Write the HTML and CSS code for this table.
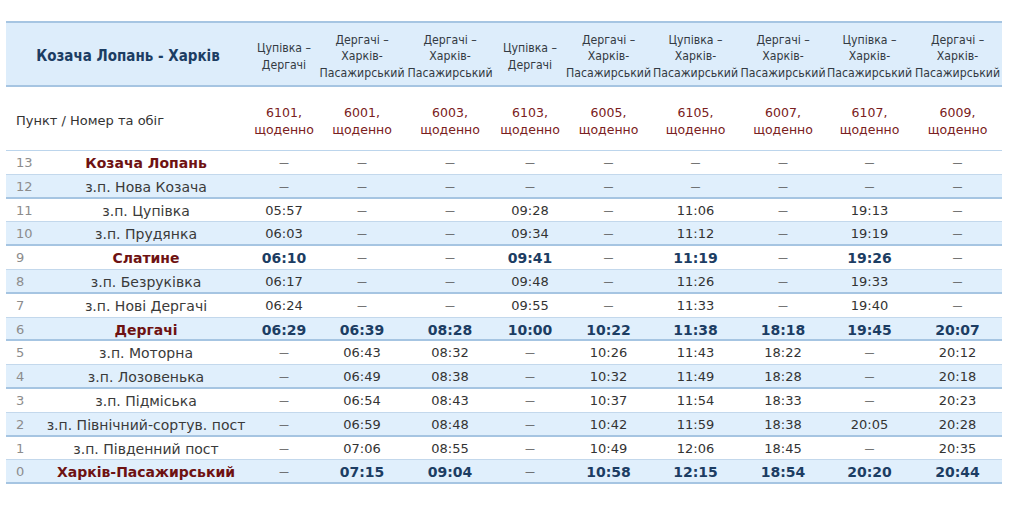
FILE: index.html
```html
<!DOCTYPE html>
<html lang="uk">
<head>
<meta charset="utf-8">
<title>Козача Лопань - Харків</title>
<link rel="stylesheet" href="styles.css">
</head>
<body>
<table class="schedule">
  <colgroup>
    <col class="w-num"><col class="w-st">
    <col class="w-68"><col class="w-88"><col class="w-88"><col class="w-72"><col class="w-85"><col class="w-89"><col class="w-86"><col class="w-87"><col class="w-89">
  </colgroup>
  <thead>
    <tr class="h-route">
      <th colspan="2" class="title">Козача Лопань - Харків</th>
      <th>Цупівка –<br>Дергачі</th>
      <th>Дергачі –<br>Харків-<br>Пасажирський</th>
      <th>Дергачі –<br>Харків-<br>Пасажирський</th>
      <th>Цупівка –<br>Дергачі</th>
      <th>Дергачі –<br>Харків-<br>Пасажирський</th>
      <th>Цупівка –<br>Харків-<br>Пасажирський</th>
      <th>Дергачі –<br>Харків-<br>Пасажирський</th>
      <th>Цупівка –<br>Харків-<br>Пасажирський</th>
      <th>Дергачі –<br>Харків-<br>Пасажирський</th>
    </tr>
    <tr class="h-train">
      <td colspan="2" class="label">Пункт / Номер та обіг</td>
      <td>6101,<br>щоденно</td>
      <td>6001,<br>щоденно</td>
      <td>6003,<br>щоденно</td>
      <td>6103,<br>щоденно</td>
      <td>6005,<br>щоденно</td>
      <td>6105,<br>щоденно</td>
      <td>6007,<br>щоденно</td>
      <td>6107,<br>щоденно</td>
      <td>6009,<br>щоденно</td>
    </tr>
  </thead>
  <tbody>
    <tr class="odd main"><td class="num">13</td><td class="st">Козача Лопань</td><td class="no">—</td><td class="no">—</td><td class="no">—</td><td class="no">—</td><td class="no">—</td><td class="no">—</td><td class="no">—</td><td class="no">—</td><td class="no">—</td></tr>
    <tr class="even"><td class="num">12</td><td class="st">з.п. Нова Козача</td><td class="no">—</td><td class="no">—</td><td class="no">—</td><td class="no">—</td><td class="no">—</td><td class="no">—</td><td class="no">—</td><td class="no">—</td><td class="no">—</td></tr>
    <tr class="odd"><td class="num">11</td><td class="st">з.п. Цупівка</td><td>05:57</td><td class="no">—</td><td class="no">—</td><td>09:28</td><td class="no">—</td><td>11:06</td><td class="no">—</td><td>19:13</td><td class="no">—</td></tr>
    <tr class="even"><td class="num">10</td><td class="st">з.п. Прудянка</td><td>06:03</td><td class="no">—</td><td class="no">—</td><td>09:34</td><td class="no">—</td><td>11:12</td><td class="no">—</td><td>19:19</td><td class="no">—</td></tr>
    <tr class="odd main"><td class="num">9</td><td class="st">Слатине</td><td>06:10</td><td class="no">—</td><td class="no">—</td><td>09:41</td><td class="no">—</td><td>11:19</td><td class="no">—</td><td>19:26</td><td class="no">—</td></tr>
    <tr class="even"><td class="num">8</td><td class="st">з.п. Безруківка</td><td>06:17</td><td class="no">—</td><td class="no">—</td><td>09:48</td><td class="no">—</td><td>11:26</td><td class="no">—</td><td>19:33</td><td class="no">—</td></tr>
    <tr class="odd"><td class="num">7</td><td class="st">з.п. Нові Дергачі</td><td>06:24</td><td class="no">—</td><td class="no">—</td><td>09:55</td><td class="no">—</td><td>11:33</td><td class="no">—</td><td>19:40</td><td class="no">—</td></tr>
    <tr class="even main"><td class="num">6</td><td class="st">Дергачі</td><td>06:29</td><td>06:39</td><td>08:28</td><td>10:00</td><td>10:22</td><td>11:38</td><td>18:18</td><td>19:45</td><td>20:07</td></tr>
    <tr class="odd"><td class="num">5</td><td class="st">з.п. Моторна</td><td class="no">—</td><td>06:43</td><td>08:32</td><td class="no">—</td><td>10:26</td><td>11:43</td><td>18:22</td><td class="no">—</td><td>20:12</td></tr>
    <tr class="even"><td class="num">4</td><td class="st">з.п. Лозовенька</td><td class="no">—</td><td>06:49</td><td>08:38</td><td class="no">—</td><td>10:32</td><td>11:49</td><td>18:28</td><td class="no">—</td><td>20:18</td></tr>
    <tr class="odd"><td class="num">3</td><td class="st">з.п. Підміська</td><td class="no">—</td><td>06:54</td><td>08:43</td><td class="no">—</td><td>10:37</td><td>11:54</td><td>18:33</td><td class="no">—</td><td>20:23</td></tr>
    <tr class="even"><td class="num">2</td><td class="st">з.п. Північний-сортув. пост</td><td class="no">—</td><td>06:59</td><td>08:48</td><td class="no">—</td><td>10:42</td><td>11:59</td><td>18:38</td><td>20:05</td><td>20:28</td></tr>
    <tr class="odd"><td class="num">1</td><td class="st">з.п. Південний пост</td><td class="no">—</td><td>07:06</td><td>08:55</td><td class="no">—</td><td>10:49</td><td>12:06</td><td>18:45</td><td class="no">—</td><td>20:35</td></tr>
    <tr class="even main"><td class="num">0</td><td class="st">Харків-Пасажирський</td><td class="no">—</td><td>07:15</td><td>09:04</td><td class="no">—</td><td>10:58</td><td>12:15</td><td>18:54</td><td>20:20</td><td>20:44</td></tr>
  </tbody>
</table>
</body>
</html>
```
FILE: styles.css
```css
html, body {
  margin: 0;
  background: #ffffff;
}
body {
  padding: 21px 7px 0 6px;
  font-family: "DejaVu Sans", Verdana, sans-serif;
  font-size: 13px;
  color: #333333;
}
.schedule {
  width: 996px;
  table-layout: fixed;
  border-collapse: separate;
  border-spacing: 0;
}
.w-num { width: 36px; }
.w-st { width: 208px; }
.w-68 { width: 68px; }
.w-72 { width: 72px; }
.w-85 { width: 85px; }
.w-86 { width: 86px; }
.w-87 { width: 87px; }
.w-88 { width: 88px; }
.w-89 { width: 89px; }

.schedule th,
.schedule td {
  box-sizing: border-box;
  padding: 0;
  text-align: center;
  vertical-align: middle;
  white-space: nowrap;
}

/* header: route names */
.h-route th {
  height: 66px;
  padding-top: 5px;
  background: #ddedfb;
  border-top: 2px solid #a6c5e2;
  border-bottom: 2px solid #a6c5e2;
  font-family: "DejaVu Sans Condensed", "DejaVu Sans", sans-serif;
  font-stretch: condensed;
  font-weight: normal;
  font-size: 12.2px;
  line-height: 16.5px;
  color: #333a42;
}
.h-route th.title {
  padding-top: 4px;
  font-weight: bold;
  font-size: 15px;
  color: #1c3d63;
}

/* header: train numbers */
.h-train td {
  height: 64px;
  padding-top: 4px;
  border-bottom: 1px solid #bcd5ec;
  font-size: 12.5px;
  line-height: 17px;
  color: #7a2020;
}
.h-train td.label {
  text-align: left;
  padding-left: 10px;
  font-size: 13px;
  color: #333333;
}

/* body rows */
.schedule tbody td {
  vertical-align: top;
  padding-top: 4px;
  line-height: 16px;
}
tbody tr.odd td {
  height: 23.8px;
  background: #ffffff;
  border-bottom: 1px solid #c3d8ec;
}
tbody tr.even td {
  height: 23.8px;
  background: #e0effc;
  border-bottom: 2px solid #a6c5e2;
}
.schedule tbody td.num {
  text-align: left;
  padding-left: 10px;
  color: #8c8c8c;
}
tbody td.st {
  font-size: 14px;
  color: #3a3a3a;
}
tbody td.no {
  font-size: 10px;
  color: #555555;
}
tbody tr.main td {
  font-weight: bold;
  font-size: 14px;
  color: #1c3d63;
}
tbody tr.main td.st {
  color: #6e1212;
}
tbody tr.main td.num,
tbody tr.main td.no {
  font-weight: normal;
}
tbody tr.main td.num {
  font-size: 13px;
  color: #8c8c8c;
}
tbody tr.main td.no {
  font-size: 10px;
  color: #555555;
}
```
